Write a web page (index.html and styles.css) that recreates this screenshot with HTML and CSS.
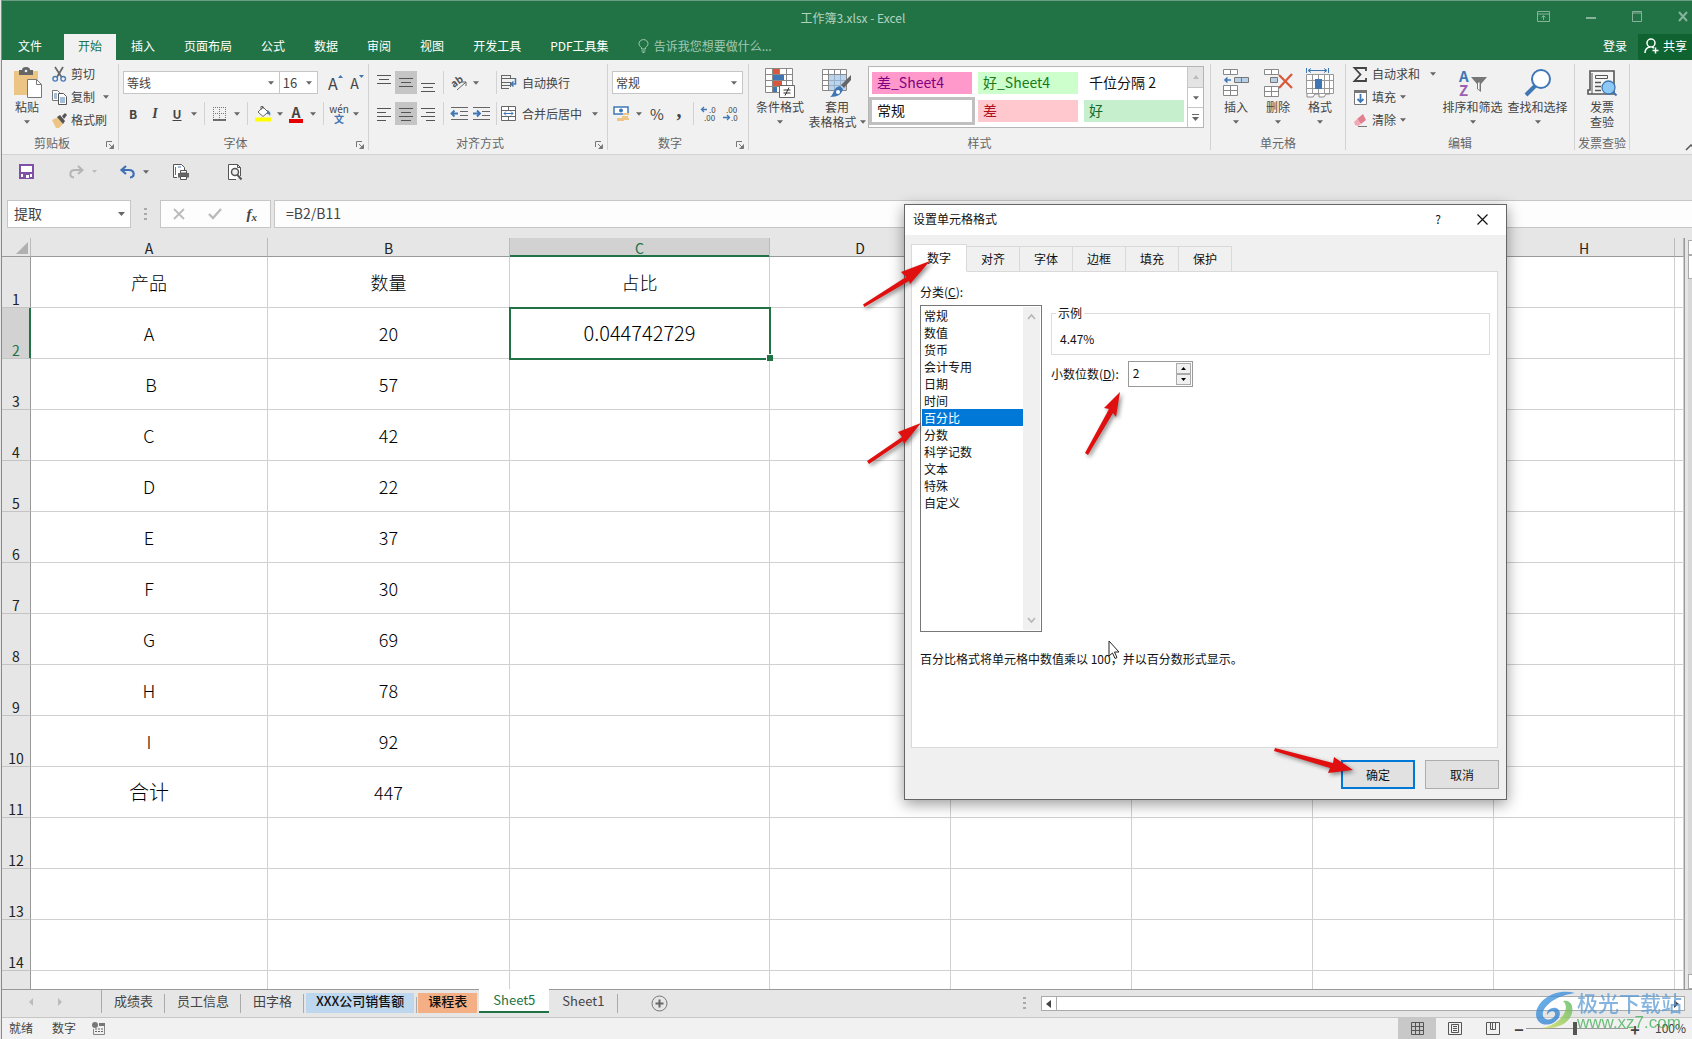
FILE: index.html
```html
<!DOCTYPE html>
<html lang="zh-CN">
<head>
<meta charset="utf-8">
<title>工作簿3.xlsx - Excel</title>
<link rel="stylesheet" href="styles.css">
</head>
<body>
<svg class="defs" width="0" height="0" aria-hidden="true">
  <symbol id="caret" viewBox="0 0 7 4"><path d="M0 0h7L3.500 4z" fill="#666"/></symbol>
  <symbol id="launch" viewBox="0 0 8 8"><path d="M.5 6V.5H6M3 3l3 3M7.500 3.500v4h-4" fill="none" stroke="#777"/><path d="M7.500 3.500v4h-4z" fill="#777"/></symbol>
  <symbol id="al-c" viewBox="0 0 14 14"><path d="M0 1.500h14M2 5.500h10M0 9.500h14M2 13.500h10" stroke="#555"/></symbol>
  <linearGradient id="swirl" x1="0" y1="0" x2="1" y2="1"><stop offset="0" stop-color="#3f9be6"/><stop offset="1" stop-color="#1f6fc4"/></linearGradient>
  <linearGradient id="leaf" x1="0" y1="1" x2="1" y2="0"><stop offset="0" stop-color="#d5dc4a"/><stop offset="1" stop-color="#4fb55c"/></linearGradient>
</svg>
<div class="app">
  <header class="titlebar">
    <h1 class="doc-title">工作簿3.xlsx - Excel</h1>
    <div class="win-btns">
      <button aria-label="功能区显示选项"><svg width="13" height="11" viewBox="0 0 13 11"><path d="M.5.5h12v10H.5zM.5 3h12M6.500 9V5M4.500 6.500l2-2 2 2" fill="none" stroke="currentColor"/></svg></button>
      <button aria-label="最小化"><svg width="10" height="11" viewBox="0 0 10 11"><path d="M0 7h10" stroke="currentColor" stroke-width="2"/></svg></button>
      <button aria-label="最大化"><svg width="10" height="11" viewBox="0 0 10 11"><path d="M.5.5h9v10h-9zM.5 2h9" fill="none" stroke="currentColor"/></svg></button>
      <button aria-label="关闭"><svg width="10" height="11" viewBox="0 0 10 11"><path d="M1 1l8 9M9 1l-8 9" stroke="currentColor" stroke-width="2"/></svg></button>
    </div>
  </header>
  <nav class="tabs">
    <button class="tab file">文件</button>
    <button class="tab active">开始</button>
    <button class="tab">插入</button>
    <button class="tab">页面布局</button>
    <button class="tab">公式</button>
    <button class="tab">数据</button>
    <button class="tab">审阅</button>
    <button class="tab">视图</button>
    <button class="tab">开发工具</button>
    <button class="tab">PDF工具集</button>
    <button class="tell"><svg width="11" height="14" viewBox="0 0 11 14"><path d="M3.500 10V8.500C2 7.500 1 6.300 1 4.700 1 2.300 3 .6 5.500.6S10 2.300 10 4.700c0 1.600-1 2.800-2.500 3.800V10zM3.500 12h4M4.500 13.500h2" fill="none" stroke="currentColor"/></svg>告诉我您想要做什么...</button>
    <span class="grow"></span>
    <button class="login">登录</button>
    <button class="share"><svg width="15" height="16" viewBox="0 0 15 16"><circle cx="7" cy="5" r="4" fill="none" stroke="#fff" stroke-width="1.500"/><path d="M1 15c0-3 2-5.500 5-6M8 9l2 1M11.500 9.500v6M8.500 12.500h6" fill="none" stroke="#fff" stroke-width="1.500"/></svg>共享</button>
  </nav>

  <section class="ribbon">
    <div class="group g-clip">
      <div class="body">
        <button class="big paste"><svg width="29" height="30" viewBox="0 0 29 30"><path d="M1 3h24v24H1z" fill="#ecc584"/><path d="M6 2h3a4 3 0 0 1 8 0h3v5H6z" fill="#666"/><circle cx="13" cy="3" r="1.300" fill="#f0f0f0"/><path d="M14.500 11.500h9l5 5v13h-14z" fill="#fff" stroke="#777"/><path d="M23.500 11.500v5h5" fill="none" stroke="#777"/></svg><span>粘贴</span><svg class="caret" width="6" height="4"><use href="#caret"/></svg></button>
        <div class="stack">
          <button class="sm"><svg width="15" height="15" viewBox="0 0 15 15"><path d="M3 0l6.500 10M11 0L5 10" stroke="#666" stroke-width="1.700"/><circle cx="3.200" cy="11.800" r="2.300" fill="none" stroke="#4a7fb5" stroke-width="1.400"/><circle cx="11.200" cy="11.800" r="2.300" fill="none" stroke="#4a7fb5" stroke-width="1.400"/></svg>剪切</button>
          <button class="sm"><svg width="15" height="15" viewBox="0 0 15 15"><path d="M.5.5h5l2 2v8h-7z" fill="#fff" stroke="#777"/><path d="M6.500 3.500h5l3 3v8h-8z" fill="#fff" stroke="#555"/><path d="M2 4h3M2 6h3M2 8h3M8 8h5M8 10h5M8 12h5" stroke="#4a7fb5"/></svg>复制<span class="grow"></span><svg class="caret" width="6" height="4"><use href="#caret"/></svg></button>
          <button class="sm"><svg width="15" height="15" viewBox="0 0 15 15"><path d="M0 7l6-3 5 7-4 4H4z" fill="#ecc584"/><path d="M5 4l3-2 5 6-2 3zM10 3l3-3 2 2-3 4z" fill="#555"/></svg>格式刷</button>
        </div>
      </div>
      <div class="cap launch"><span>剪贴板</span><svg width="8" height="8"><use href="#launch"/></svg></div>
    </div>

    <div class="group g-font">
      <div class="body col">
        <div class="line">
          <label class="combo fam"><select aria-label="字体"><option>等线</option></select><svg width="6" height="4"><use href="#caret"/></svg></label>
          <label class="combo size"><select aria-label="字号"><option>16</option></select><svg width="6" height="4"><use href="#caret"/></svg></label>
          <button class="ib gap6" aria-label="增大字号"><span class="g16">A</span><svg width="5" height="16" viewBox="0 0 5 16"><path d="M0 3l2.500-3L5 3z" fill="#3f77b5"/></svg></button>
          <button class="ib" aria-label="减小字号"><span class="g14">A</span><svg width="5" height="16" viewBox="0 0 5 16"><path d="M0 0h5L2.500 3z" fill="#3f77b5"/></svg></button>
        </div>
        <div class="line">
          <button class="ib bold">B</button><button class="ib ital">I</button><button class="ib under">U</button>
          <button class="dd" aria-label="下划线样式"><svg width="6" height="4"><use href="#caret"/></svg></button><i class="sep"></i>
          <button class="ib" aria-label="边框"><svg width="14" height="14" viewBox="0 0 14 14"><path d="M.5 0v13M6.500 0v13M12.500 0v13M0 .5h13M0 6.500h13" stroke="#777" stroke-dasharray="1 1"/><path d="M0 13h13" stroke="#444" stroke-width="1.500"/></svg></button>
          <button class="dd" aria-label="边框选项"><svg width="6" height="4"><use href="#caret"/></svg></button><i class="sep"></i>
          <button class="ib" aria-label="填充颜色"><svg width="17" height="17" viewBox="0 0 17 17"><path d="M3 7l5-5 5 5-5 4.500z" fill="#fff" stroke="#666"/><path d="M6 5V1.500h2V4" fill="none" stroke="#666"/><path d="M12 5c3 1 4 3 3 6-1-2-2-2-3-2z" fill="#4a7fb5"/><path d="M0 12.500h16v4H0z" fill="#ff0"/></svg></button>
          <button class="dd" aria-label="填充选项"><svg width="6" height="4"><use href="#caret"/></svg></button>
          <button class="ib fc" aria-label="字体颜色"><b>A</b></button>
          <button class="dd" aria-label="字体颜色选项"><svg width="6" height="4"><use href="#caret"/></svg></button><i class="sep"></i>
          <button class="ib pinyin"><span>wén</span><b>文</b></button>
          <button class="dd" aria-label="拼音选项"><svg width="6" height="4"><use href="#caret"/></svg></button>
        </div>
      </div>
      <div class="cap launch"><span>字体</span><svg width="8" height="8"><use href="#launch"/></svg></div>
    </div>

    <div class="group g-align">
      <div class="body col">
        <div class="line">
          <button class="ib" aria-label="顶端对齐"><svg width="14" height="18" viewBox="0 0 14 18"><path d="M0 1.500h14M2 5.500h10M0 9.500h14" stroke="#555"/></svg></button>
          <button class="ib on" aria-label="垂直居中"><svg width="14" height="18" viewBox="0 0 14 18"><path d="M0 4.500h14M2 8.500h10M0 12.500h14" stroke="#555"/></svg></button>
          <button class="ib" aria-label="底端对齐"><svg width="14" height="18" viewBox="0 0 14 18"><path d="M0 9.500h14M2 13.500h10M0 17.500h14" stroke="#555"/></svg></button><i class="sep"></i>
          <button class="ib" aria-label="方向"><svg width="17" height="16" viewBox="0 0 17 16"><text x="1" y="11" font-size="10" font-weight="700" fill="#555" transform="rotate(-35 5 9)">ab</text><path d="M6 15l9-8M11 7h4v4" fill="none" stroke="#666"/></svg></button>
          <button class="dd" aria-label="方向选项"><svg width="6" height="4"><use href="#caret"/></svg></button><span class="sp11"></span><i class="sep"></i>
          <button class="txt"><svg width="16" height="15" viewBox="0 0 16 15"><path d="M1 .5h8M1 3.500h13M1 7.500h8M1 10.500h8M1 13.500h7" stroke="#666"/><path d="M.5 0v14M9.500 0v4M9.500 7v5" stroke="#666"/><path d="M14.500 3v6H10M12.500 6.500l-2.500 2.500 2.500 2.500" fill="none" stroke="#3f77b5" stroke-width="1.500"/></svg>自动换行</button>
        </div>
        <div class="line">
          <button class="ib" aria-label="左对齐"><svg width="14" height="14" viewBox="0 0 14 14"><path d="M0 1.500h14M0 5.500h9M0 9.500h14M0 13.500h9" stroke="#555"/></svg></button>
          <button class="ib on" aria-label="居中"><svg width="14" height="14"><use href="#al-c"/></svg></button>
          <button class="ib" aria-label="右对齐"><svg width="14" height="14" viewBox="0 0 14 14"><path d="M0 1.500h14M5 5.500h9M0 9.500h14M5 13.500h9" stroke="#555"/></svg></button><i class="sep"></i>
          <button class="ib" aria-label="减少缩进"><svg width="17" height="13" viewBox="0 0 17 13"><path d="M0 .5h17M9 4.500h8M9 8.500h8M0 12.500h17" stroke="#666"/><path d="M7 6.500H1M3.500 3.500l-3 3 3 3" fill="none" stroke="#3f77b5" stroke-width="1.800"/></svg></button>
          <button class="ib" aria-label="增加缩进"><svg width="17" height="13" viewBox="0 0 17 13"><path d="M0 .5h17M9 4.500h8M9 8.500h8M0 12.500h17" stroke="#666"/><path d="M0 6.500h6M4 3.500l3 3-3 3" fill="none" stroke="#3f77b5" stroke-width="1.800"/></svg></button><i class="sep"></i>
          <button class="txt"><svg width="16" height="15" viewBox="0 0 16 15"><path d="M.5.5h14v14H.5zM.5 4.500h14M.5 10.500h14M7.500 0v4.500M7.500 10.500v4" fill="#fff" stroke="#666"/><path d="M3 7.500h9M5 5.500l-2 2 2 2M10 5.500l2 2-2 2" fill="none" stroke="#3f77b5"/></svg>合并后居中</button>
          <button class="dd merge" aria-label="合并选项"><svg width="6" height="4"><use href="#caret"/></svg></button>
        </div>
      </div>
      <div class="cap launch"><span>对齐方式</span><svg width="8" height="8"><use href="#launch"/></svg></div>
    </div>

    <div class="group g-num">
      <div class="body col">
        <div class="line">
          <label class="combo fmt"><select aria-label="数字格式"><option>常规</option></select><svg width="6" height="4"><use href="#caret"/></svg></label>
        </div>
        <div class="line">
          <button class="ib" aria-label="会计数字格式"><svg width="18" height="17" viewBox="0 0 18 17"><path d="M1 2h14v7H1z" fill="#fff" stroke="#3f77b5" stroke-width="1.500"/><circle cx="8" cy="5.500" r="2" fill="#3f77b5"/><path d="M10 8h6v2h-6zM9 11h6v2H9zM4 13h7v3H4zM11 13h5v2h-5z" fill="#ecc584"/></svg></button>
          <button class="dd" aria-label="货币选项"><svg width="6" height="4"><use href="#caret"/></svg></button>
          <button class="ib pct">%</button>
          <button class="ib comma" aria-label="千位分隔">,</button><i class="sep"></i>
          <button class="ib dec" aria-label="增加小数位数"><svg width="16" height="16" viewBox="0 0 16 16"><path d="M6 3.500H1M3 1L.5 3.500 3 6" fill="none" stroke="#3f77b5" stroke-width="1.300"/><text x="8" y="7" font-size="8">.0</text><text x="3" y="15" font-size="8">.00</text></svg></button>
          <button class="ib dec" aria-label="减少小数位数"><svg width="16" height="16" viewBox="0 0 16 16"><text x="3" y="7" font-size="8">.00</text><path d="M0 11.500h6M4 9l2.500 2.500L4 14" fill="none" stroke="#3f77b5" stroke-width="1.300"/><text x="8" y="15" font-size="8">.0</text></svg></button>
        </div>
      </div>
      <div class="cap launch"><span>数字</span><svg width="8" height="8"><use href="#launch"/></svg></div>
    </div>

    <div class="group g-style">
      <div class="body">
        <button class="big cond"><svg width="30" height="30" viewBox="0 0 30 30"><path d="M.5.5h27v24H.5zM.5 6.500h27M.5 12.500h27M.5 18.500h27M7.500.5v24M14.500.5v24M21.500.5v24" fill="#fff" stroke="#888"/><path d="M8 1h6v5H8zM8 13h9v5H8z" fill="#d9583c"/><path d="M8 7h11v5H8zM8 19h4v5H8z" fill="#3f77b5"/><path d="M14.500 17.500h15v12h-15z" fill="#fff" stroke="#666"/><path d="M18.500 22h7M18.500 25h7M24 19.500l-4 8" stroke="#333"/></svg><span>条件格式</span><svg class="caret" width="6" height="4"><use href="#caret"/></svg></button>
        <button class="big tblfmt"><svg width="30" height="30" viewBox="0 0 30 30"><path d="M.5 1.500h24v21H.5zM.5 6.500h24M.5 12.500h24M.5 17.500h24M6.500 1.500v21M12.500 1.500v21M18.500 1.500v21" fill="#fff" stroke="#888"/><path d="M7 7h17v15H7z" fill="#9cc3e6" opacity=".7"/><path d="M29 7v5l-7 8-3-3z" fill="#666"/><path d="M18 18l3 3c-1 5-5 8-13 8 4-2 3-10 10-11z" fill="#3f77b5"/><circle cx="16" cy="24" r="2" fill="#fff"/></svg><span>套用</span><span class="two">表格格式<svg class="caret" width="6" height="4"><use href="#caret"/></svg></span></button>
        <div class="gallery">
          <div class="styles">
            <button class="st pink">差_Sheet4</button><button class="st lime">好_Sheet4</button><button class="st">千位分隔 2</button>
            <button class="st sel">常规</button><button class="st bad">差</button><button class="st good">好</button>
          </div>
          <div class="gal-scroll">
            <button class="off" aria-label="向上"><svg width="6" height="4" viewBox="0 0 6 4"><path d="M0 4l3-4 3 4z" fill="#bbb"/></svg></button>
            <button aria-label="向下"><svg width="6" height="4"><use href="#caret"/></svg></button>
            <button aria-label="其他"><svg width="7" height="7" viewBox="0 0 7 7"><path d="M0 .5h7" stroke="#666"/><path d="M0 3h7L3.500 7z" fill="#666"/></svg></button>
          </div>
        </div>
      </div>
      <div class="cap"><span>样式</span></div>
    </div>

    <div class="group g-cells">
      <div class="body">
        <button class="big"><svg width="30" height="30" viewBox="0 0 30 30"><path d="M2.500 1.500h14v5h-14zM9.500 1.500v5M2.500 17.500h14v10h-14zM2.500 22.500h14M9.500 17.500v10" fill="#fff" stroke="#888"/><path d="M13.500 9.500h14v5h-14zM20.500 9.500v5" fill="#b8d0e6" stroke="#777"/><path d="M10 12H4M6.500 9.500L4 12l2.500 2.500" fill="none" stroke="#3f77b5" stroke-width="1.600"/></svg><span>插入</span><svg class="caret" width="6" height="4"><use href="#caret"/></svg></button>
        <button class="big"><svg width="30" height="30" viewBox="0 0 30 30"><path d="M1.500 1.500h14v5h-14zM8.500 1.500v5M1.500 18.500h14v10h-14zM1.500 23.500h14M8.500 18.500v10" fill="#fff" stroke="#888"/><path d="M7.500 9.500h7v5h-7z" fill="#b8d0e6" stroke="#777"/><path d="M16 7l13 13M29 6L16 20" stroke="#d9583c" stroke-width="2.200"/></svg><span>删除</span><svg class="caret" width="6" height="4"><use href="#caret"/></svg></button>
        <button class="big"><svg width="30" height="30" viewBox="0 0 30 30"><path d="M1.500 6.500h27v19h-27zM1.500 12.500h27M1.500 20.500h27M7.500 6.500v19M13.500 6.500v19M19.500 6.500v19M24.500 6.500v19" fill="#fff" stroke="#999"/><path d="M10 11h7v10h-7z" fill="#3f77b5"/><path d="M1.500 0v5M23.500 0v5M4 2.500h17M6 .5l-3 2 3 2M19 .5l3 2-3 2" fill="none" stroke="#3f77b5"/><path d="M2 26v3h6l2-3h4v3h5l2-3h4" fill="#fff" stroke="#888"/></svg><span>格式</span><svg class="caret" width="6" height="4"><use href="#caret"/></svg></button>
      </div>
      <div class="cap"><span>单元格</span></div>
    </div>

    <div class="group g-edit">
      <div class="body">
        <div class="stack">
          <button class="sm"><svg width="15" height="15" viewBox="0 0 15 15"><path d="M13 4V1H1.500l6 6.500-6 6.500H13v-3" fill="none" stroke="#444" stroke-width="1.800"/></svg>自动求和<span class="grow"></span><svg class="caret" width="6" height="4"><use href="#caret"/></svg></button>
          <button class="sm"><svg width="15" height="15" viewBox="0 0 15 15"><path d="M1.500.5h12v14h-12z" fill="#fff" stroke="#777"/><path d="M1 0h13v3H1z" fill="#777"/><path d="M7.500 4v8M4.500 9l3 3 3-3" fill="none" stroke="#3f77b5" stroke-width="1.800"/></svg>填充<svg class="caret" width="6" height="4"><use href="#caret"/></svg></button>
          <button class="sm"><svg width="15" height="15" viewBox="0 0 15 15"><path d="M4 6l6-5 3 6-5 4z" fill="#e08090"/><path d="M4 6l4 5-3 2-3-1-1-3z" fill="#f2a9b5"/><path d="M5 13.500h9" stroke="#777"/></svg>清除<svg class="caret" width="6" height="4"><use href="#caret"/></svg></button>
        </div>
        <button class="big sort"><svg width="30" height="30" viewBox="0 0 30 30"><text x="1" y="14" font-size="15" font-weight="700" fill="#3f77b5">A</text><text x="1" y="28" font-size="15" font-weight="700" fill="#9a5fb0">Z</text><path d="M13 9h16l-6 7v8l-4-3v-5z" fill="#777"/><path d="M20 15v6l1.500 1v-8z" fill="#fff"/></svg><span>排序和筛选</span><svg class="caret" width="6" height="4"><use href="#caret"/></svg></button>
        <button class="big sort"><svg width="30" height="30" viewBox="0 0 30 30"><circle cx="18" cy="11" r="9" fill="#fff" stroke="#3f77b5" stroke-width="2"/><path d="M12 18L3 27" stroke="#3f77b5" stroke-width="4"/></svg><span>查找和选择</span><svg class="caret" width="6" height="4"><use href="#caret"/></svg></button>
      </div>
      <div class="cap"><span>编辑</span></div>
    </div>

    <div class="group g-inv">
      <div class="body">
        <button class="big"><svg width="30" height="30" viewBox="0 0 30 30"><path d="M3 3h24v23H1v-4h2z" fill="#f6f6f6" stroke="#555" stroke-width="1.600"/><path d="M5 26V5" stroke="#555"/><path d="M8.500 7.500h12v3h-12z" fill="none" stroke="#555"/><path d="M8 14.500h6M8 18.500h6M8 22.500h6" stroke="#555" stroke-width="1.500"/><circle cx="21.500" cy="19.500" r="6.500" fill="#8ec8f5" stroke="#3f77b5" stroke-width="1.300"/><path d="M26 24l3.500 3.500" stroke="#3f77b5" stroke-width="2"/></svg><span>发票</span><span>查验</span></button>
      </div>
      <div class="cap"><span>发票查验</span></div>
    </div>
    <span class="grow"></span>
    <button class="collapse" aria-label="折叠功能区"><svg width="6" height="6" viewBox="0 0 6 6"><path d="M0 6l5-5 5 5" fill="none" stroke="#555" stroke-width="1.500"/></svg></button>
  </section>

  <div class="qat">
    <button aria-label="保存"><svg width="15" height="15" viewBox="0 0 15 15"><path d="M1 1h13v13H1z" fill="#fff" stroke="#8050a8" stroke-width="2"/><path d="M2 8h11v2H2zM4 10h7v4H4z" fill="#8050a8"/><path d="M7 11h3v3H7z" fill="#fff"/></svg></button>
    <button class="redo" aria-label="恢复"><svg width="15" height="14" viewBox="0 0 15 14"><path d="M13 5H6C0 5 0 12 5 12.500M9 1l4.500 4L9 9" fill="none" stroke="#b5b5b5" stroke-width="2"/></svg><svg width="5" height="3" viewBox="0 0 5 3"><path d="M0 0h5L2.500 3z" fill="#bbb"/></svg></button>
    <button class="undo" aria-label="撤消"><svg width="15" height="14" viewBox="0 0 15 14"><path d="M2 5h7c6 0 6 7 1 7.500M6 1L1.500 5 6 9" fill="none" stroke="#3f6fb5" stroke-width="2.200"/></svg><svg class="caret" width="6" height="4"><use href="#caret"/></svg></button>
    <button class="print" aria-label="快速打印"><svg width="17" height="16" viewBox="0 0 17 16"><path d="M4 13.500H.5V.5h8l3 3V6" fill="#fff" stroke="#555"/><path d="M2.500 3v8M5 3h3" stroke="#3f77b5"/><path d="M5 9h11v4.500H5z" fill="#666"/><path d="M7.500 6.500h6V9h-6zM7.500 12.500h6v3h-6z" fill="#fff" stroke="#555"/></svg></button>
    <button class="preview" aria-label="打印预览"><svg width="15" height="16" viewBox="0 0 15 16"><path d="M8 15.500H.5V.5h9l3 3V12M9.500.5v3h3" fill="#fff" stroke="#555"/><circle cx="7" cy="8" r="3.500" fill="#eee" stroke="#555" stroke-width="1.500"/><path d="M9.500 11l4 4.500" stroke="#555" stroke-width="2"/></svg></button>
  </div>

  <div class="fbar">
    <label class="combo name"><select aria-label="名称框"><option>提取</option></select><svg width="7" height="4"><use href="#caret"/></svg></label>
    <span class="dots"></span>
    <div class="fx">
      <button aria-label="取消"><svg width="12" height="12" viewBox="0 0 12 12"><path d="M1 1l10 10M11 1L1 11" stroke="#bbb" stroke-width="1.800"/></svg></button>
      <button aria-label="输入"><svg width="14" height="12" viewBox="0 0 14 12"><path d="M1 6l4 4 8-9" fill="none" stroke="#bbb" stroke-width="2.400"/></svg></button>
      <button class="fn" aria-label="插入函数"><i>f</i><sub>x</sub></button>
    </div>
    <input class="formula" aria-label="编辑栏" value="=B2/B11">
  </div>

  <main class="sheet">
    <table class="grid">
      <colgroup><col class="c0"><col class="cA"><col class="cB"><col class="cC"><col class="cN"><col class="cN"><col class="cN"><col class="cN"><col class="cN"><col></colgroup>
      <thead><tr><th class="corner"><svg width="12" height="12" viewBox="0 0 12 12"><path d="M12 0v12H0z" fill="#b0b0b0"/></svg></th><th>A</th><th>B</th><th class="hot">C</th><th>D</th><th>E</th><th>F</th><th>G</th><th>H</th><th></th></tr></thead>
      <tbody>
        <tr><th>1</th><td>产品</td><td>数量</td><td>占比</td><td></td><td></td><td></td><td></td><td></td><td></td></tr>
        <tr><th class="hot">2</th><td>A</td><td>20</td><td class="cur">0.044742729</td><td></td><td></td><td></td><td></td><td></td><td></td></tr>
        <tr><th>3</th><td>&nbsp;B</td><td>57</td><td></td><td></td><td></td><td></td><td></td><td></td><td></td></tr>
        <tr><th>4</th><td>C</td><td>42</td><td></td><td></td><td></td><td></td><td></td><td></td><td></td></tr>
        <tr><th>5</th><td>D</td><td>22</td><td></td><td></td><td></td><td></td><td></td><td></td><td></td></tr>
        <tr><th>6</th><td>E</td><td>37</td><td></td><td></td><td></td><td></td><td></td><td></td><td></td></tr>
        <tr><th>7</th><td>F</td><td>30</td><td></td><td></td><td></td><td></td><td></td><td></td><td></td></tr>
        <tr><th>8</th><td>G</td><td>69</td><td></td><td></td><td></td><td></td><td></td><td></td><td></td></tr>
        <tr><th>9</th><td>H</td><td>78</td><td></td><td></td><td></td><td></td><td></td><td></td><td></td></tr>
        <tr><th>10</th><td>I</td><td>92</td><td></td><td></td><td></td><td></td><td></td><td></td><td></td></tr>
        <tr><th>11</th><td class="sum">合计</td><td>447</td><td></td><td></td><td></td><td></td><td></td><td></td><td></td></tr>
        <tr><th>12</th><td></td><td></td><td></td><td></td><td></td><td></td><td></td><td></td><td></td></tr>
        <tr><th>13</th><td></td><td></td><td></td><td></td><td></td><td></td><td></td><td></td><td></td></tr>
        <tr><th>14</th><td></td><td></td><td></td><td></td><td></td><td></td><td></td><td></td><td></td></tr>
        <tr><th></th><td></td><td></td><td></td><td></td><td></td><td></td><td></td><td></td><td></td></tr>
      </tbody>
    </table>
    <div class="vscroll"><i class="btn"></i><i class="thumb"></i><span class="grow"></span><i class="btn"></i></div>
  </main>

  <div class="sheetbar">
    <button class="nav" aria-label="上一张"><svg width="5" height="8" viewBox="0 0 5 8"><path d="M4 0v8L0 4z" fill="#bbb"/></svg></button>
    <button class="nav" aria-label="下一张"><svg width="5" height="8" viewBox="0 0 5 8"><path d="M1 0v8l4-4z" fill="#bbb"/></svg></button>
    <button class="s first">成绩表</button><button class="s">员工信息</button><button class="s">田字格</button>
    <button class="s blue">XXX公司销售额</button><button class="s orange">课程表</button><button class="s cur-s">Sheet5</button><button class="s">Sheet1</button>
    <button class="add" aria-label="新工作表"><svg width="17" height="17" viewBox="0 0 17 17"><circle cx="8.500" cy="8.500" r="7.500" fill="none" stroke="#777"/><path d="M8.500 4.500v8M4.500 8.500h8" stroke="#666" stroke-width="2"/></svg></button>
    <span class="grow"></span>
    <span class="dots"></span>
    <div class="hscroll"><button aria-label="向左滚动"><svg width="5" height="8" viewBox="0 0 5 8"><path d="M5 0v8L0 4z" fill="#444"/></svg></button><span class="grow"></span><button aria-label="向右滚动"><svg width="5" height="8" viewBox="0 0 5 8"><path d="M0 0v8l5-4z" fill="#444"/></svg></button></div>
  </div>

  <footer class="status">
    <span>就绪</span><span>数字</span>
    <svg width="13" height="13" viewBox="0 0 13 13"><circle cx="3" cy="3" r="3" fill="#777"/><path d="M7 1h6v3H7z" fill="#777"/><path d="M1.500 7v5.500h11V4" fill="none" stroke="#888"/><path d="M3 7h8M3 9.500h8" stroke="#666" stroke-dasharray="2 1"/></svg>
    <span class="grow"></span>
    <button class="view on" aria-label="普通"><svg width="13" height="13" viewBox="0 0 13 13"><path d="M.5.5h12v12H.5zM.5 4.500h12M.5 8.500h12M4.500.5v12M8.500.5v12" fill="none" stroke="#555"/></svg></button>
    <button class="view" aria-label="页面布局"><svg width="14" height="13" viewBox="0 0 14 13"><path d="M.5.5h13v12H.5zM3.500 2.500h7v8h-7zM5 4.500h4M5 6.500h4M5 8.500h4" fill="none" stroke="#555"/></svg></button>
    <button class="view" aria-label="分页预览"><svg width="14" height="13" viewBox="0 0 14 13"><path d="M.5.5h13v12H.5zM4.500.5v7h5v-7M6.500 .5v7" fill="none" stroke="#555"/></svg></button>
    <button class="zm" aria-label="缩小">−</button><input class="zoom" type="range" aria-label="显示比例" min="0" max="100" value="48"><button class="zm" aria-label="放大">+</button>
    <span class="pc">100%</span>
  </footer>
</div>

<div class="dialog" role="dialog" aria-labelledby="dlg-title">
  <div class="dlg-head"><h2 id="dlg-title">设置单元格格式</h2><button>?</button><button aria-label="关闭"><svg width="11" height="11" viewBox="0 0 11 11"><path d="M.5.5l10 10M10.500.5l-10 10" stroke="#111" stroke-width="1.200"/></svg></button></div>
  <div class="dlg-body">
    <div class="dlg-tabs"><button class="act">数字</button><button>对齐</button><button>字体</button><button>边框</button><button>填充</button><button>保护</button></div>
    <div class="panel">
      <label class="cat-label" for="cat">分类(<u>C</u>):</label>
      <div class="cols">
        <div class="listbox">
          <select id="cat" size="12"><option>常规</option><option>数值</option><option>货币</option><option>会计专用</option><option>日期</option><option>时间</option><option selected>百分比</option><option>分数</option><option>科学记数</option><option>文本</option><option>特殊</option><option>自定义</option></select>
          <div class="lb-scroll"><svg width="9" height="6" viewBox="0 0 9 6"><path d="M1 5l3.500-4L8 5" fill="none" stroke="#b5b5b5" stroke-width="1.600"/></svg><svg width="9" height="6" viewBox="0 0 9 6"><path d="M1 1l3.500 4L8 1" fill="none" stroke="#b5b5b5" stroke-width="1.600"/></svg></div>
        </div>
        <div class="opts">
          <fieldset><legend>示例</legend>4.47%</fieldset>
          <div class="places"><label for="dp">小数位数(<u>D</u>):</label>
            <div class="spin"><input id="dp" type="number" value="2"><div class="arrows"><button aria-label="增加"><svg width="5" height="3" viewBox="0 0 5 3"><path d="M0 3l2.500-3L5 3z"/></svg></button><button aria-label="减少"><svg width="5" height="3" viewBox="0 0 5 3"><path d="M0 0h5L2.500 3z"/></svg></button></div></div>
          </div>
        </div>
      </div>
      <p class="note">百分比格式将单元格中数值乘以 100，并以百分数形式显示。</p>
    </div>
    <div class="dlg-foot"><button class="ok">确定</button><button>取消</button></div>
  </div>
</div>

<svg class="marks" viewBox="0 0 520 540" aria-hidden="true">
  <g fill="#e01010">
    <path d="M3 54.500L46 27l-5-5 29-11-20 23-1-3L4.500 57z"/>
    <path d="M7 211L42 187l-4-5 23-9-17 21-1-3-34 23z"/>
    <path d="M225 203L249 159l-5-1 16-16-4 25-3-4-25 42z"/>
    <path d="M415 498l58 15 1-6 19 13-25 3 2-5-56-17z"/>
  </g>
</svg>
<svg class="pointer" width="13" height="20" viewBox="0 0 13 20" aria-hidden="true"><path d="M1 1v15l3.500-3 2.500 5.500 2-1L6.500 12H11z" fill="#fff" stroke="#222"/></svg>
<div class="brand">
  <svg width="44" height="40" viewBox="0 0 44 40"><path d="M42 3C22-2 4 10 3 24c0 9 8 13 17 9 8-4 9-13 3-15-5-1-10 3-9 7 2-4 7-5 8-2 1 4-5 8-9 6C4 25 14 7 42 3z" fill="url(#swirl)"/><path d="M9 38c18 2 33-8 30-22-1-4-5-6-9-5 5 4 3 12-3 18-5 5-12 8-18 9z" fill="url(#leaf)"/></svg>
  <div class="brand-text"><b>极光下载站</b><span>www.xz7.com</span></div>
</div>
</body>
</html>
```
FILE: styles.css
```css
* { box-sizing: border-box; }
html, body { height: 100%; }
body { margin: 0; overflow: hidden; background: #e6e6e6; color: #444; font: 12px/16px "Noto Sans CJK SC", "Noto Sans", sans-serif; }
button, input, select { font: inherit; color: inherit; border: 0; background: none; padding: 0; margin: 0; border-radius: 0; outline: 0; }
button { display: flex; align-items: center; justify-content: center; white-space: nowrap; }
select { appearance: none; }
svg { display: block; flex: none; overflow: visible; }
h1, h2, p { margin: 0; font: inherit; }
.defs, .marks, .pointer { position: absolute; }
.grow { flex: 1; }

.app { display: flex; flex-direction: column; height: 100%; margin-left: 1px; border-left: 1px solid #8a8a8a; overflow: hidden; }

/* title bar and ribbon tabs */
.titlebar { flex: none; height: 34px; display: grid; grid-template-columns: 1fr auto 1fr; align-items: center; background: #217346; border-top: 1px solid #6d9d83; color: #b3d3c0; }
.doc-title { grid-column: 2; padding-left: 12px; }
.win-btns { display: flex; justify-content: flex-end; gap: 36px; color: #86b399; padding: 0 4px 2px 0; }
.tabs { flex: none; display: flex; height: 26px; background: #217346; color: #fff; padding-left: 2px; }
.tabs button { padding-bottom: 2px; }
.tab { padding: 0 14px; }
.tab + .tab { margin-left: 1px; }
.tab.file { padding-right: 22px; }
.tab.active { background: #f1f1f1; color: #217346; margin: 0; }
.tell { color: #a3c9b3; gap: 5px; margin-left: 15px; }
.login { padding: 0 11px; }
.share { background: #0f6331; gap: 4px; padding: 0 5px 0 6px; }

/* ribbon */
.ribbon { flex: none; display: flex; height: 95px; padding: 4px 0; background: #f1f1f1; border-bottom: 1px solid #d2d2d2; }
.group { flex: none; display: flex; flex-direction: column; border-right: 1px solid #d2d2d2; }
.g-clip { width: 117px; }
.g-font { width: 250px; }
.g-align { width: 239px; }
.g-num { width: 141px; }
.g-style { width: 462px; }
.g-cells { width: 135px; }
.g-edit { width: 229px; }
.g-inv { width: 55px; }
.body { flex: 1; min-height: 0; display: flex; }
.body.col { flex-direction: column; padding: 7px 0 0 3px; gap: 8px; }
.g-align .body.col { padding-left: 4px; }
.cap { flex: none; height: 17px; line-height: 20px; display: flex; justify-content: center; color: #666; position: relative; white-space: nowrap; }
.cap.launch { padding-right: 16px; }
.cap svg { position: absolute; right: 4px; bottom: 1px; }
.line { display: flex; align-items: center; height: 23px; }
.big { flex-direction: column; justify-content: flex-start; width: 42px; padding-top: 4px; }
.big > span { height: 15px; line-height: 15px; }
.big > svg:first-child { margin-bottom: 1px; }
.big > .caret { margin-top: 6px; }
.two { display: flex; align-items: center; gap: 3px; }
.paste { width: 50px; }
.stack { display: flex; flex-direction: column; padding-top: 2px; gap: 7px; }
.stack button { justify-content: flex-start; gap: 4px; height: 16px; }
.g-clip .stack { width: 57px; }
.g-edit .stack { width: 90px; padding-left: 7px; }
.combo { display: grid; background: #fff; border: 1px solid #c6c6c6; height: 23px; }
.combo select { grid-area: 1 / 1; padding: 0 5px 0 3px; width: 100%; }
.combo svg { grid-area: 1 / 1; place-self: center end; margin-right: 5px; pointer-events: none; }
.fam { width: 158px; margin-left: 1px; }
.size { width: 40px; margin-left: -1px; font-size: 13px; }
.fmt { width: 131px; margin-left: 1px; }
.ib { width: 22px; height: 23px; }
.ib.on { background: #c5c5c5; }
.gap6 { margin-left: 6px; }
.g16 { font-size: 16px; }
.g14 { font-size: 14px; }
.bold { font-weight: 700; }
.ital { font: italic bold 14px "Liberation Serif", serif; }
.under { font-weight: 700; text-decoration: underline; }
.dd { width: 11px; height: 23px; }
.sep { width: 1px; height: 23px; background: #d2d2d2; margin: 0 4px 0 5px; }
.g-align .sep { margin: 0 4px; }
.sp11 { width: 11px; }
.fc b { font-size: 14px; line-height: 14px; border-bottom: 4px solid #e60000; padding: 0 3px; }
.pinyin { flex-direction: column; }
.pinyin span { font-size: 10px; line-height: 9px; }
.pinyin b { font-size: 10px; line-height: 11px; color: #3f77b5; }
.txt { gap: 5px; }
.merge { margin-left: 7px; }
.pct { font-size: 15px; width: 26px; }
.comma { font: bold 20px/10px "Liberation Serif", serif; padding-bottom: 8px; width: 18px; }
.dec { fill: #444; }
.cond { width: 62px; }
.tblfmt { width: 52px; }
.gallery { display: flex; width: 336px; height: 62px; margin: 2px 0 0 5px; border: 1px solid #b5b5b5; background: #fff; }
.styles { flex: 1; display: grid; grid-template-columns: repeat(3, 100px); grid-template-rows: 22px 22px; gap: 6px; padding: 5px 3px; color: #111; font-size: 14px; }
.st { justify-content: flex-start; padding: 0 0 2px 5px; }
.pink { background: #ff99cc; color: #800080; }
.lime { background: #ccffcc; color: #1a7a1a; }
.bad { background: #ffc7ce; color: #b0101c; }
.good { background: #c6efce; color: #17692a; }
.sel { outline: 3px solid #c0c0c0; }
.gal-scroll { display: grid; grid-template-rows: 1fr 1fr 1fr; width: 16px; border-left: 1px solid #c6c6c6; }
.gal-scroll button + button { border-top: 1px solid #c6c6c6; }
.off { background: #e4e4e4; }
.g-cells .body { padding-left: 4px; }
.sort { width: 65px; }
.g-edit .stack + .sort { margin-left: 4px; }
.g-inv .body { padding-left: 6px; }
.collapse { align-self: flex-end; }

/* quick access toolbar */
.qat { flex: none; display: flex; align-items: center; height: 45px; padding: 0 0 12px 17px; }
.redo { margin-left: 35px; gap: 8px; }
.undo { margin-left: 23px; gap: 8px; }
.print { margin-left: 24px; }
.preview { margin-left: 38px; }

/* formula bar */
.fbar { flex: none; display: flex; height: 28px; padding-left: 5px; font-size: 14px; }
.fbar .combo { height: 28px; }
.name { width: 124px; }
.name select { padding: 0 5px 2px 6px; }
.dots { width: 3px; height: 13px; align-self: center; background: repeating-linear-gradient(#aaa 0 2px, transparent 2px 5px); }
.fbar .dots { margin: 0 13px; }
.fx { display: flex; width: 111px; background: #fdfdfd; border: 1px solid #c6c6c6; }
.fx button { flex: 1; }
.fn { font: bold 15px "Liberation Serif", serif; }
.fn sub { font: italic bold 11px "Liberation Serif", serif; margin-top: 5px; }
.formula { flex: 1; min-width: 0; margin-left: 3px; padding: 0 11px 2px; background: #fdfdfd; border: 1px solid #c6c6c6; border-right: 0; }

/* worksheet */
.sheet { flex: 1; min-height: 0; overflow: hidden; display: flex; align-items: flex-start; padding-top: 10px; }
.grid { flex: 1; width: 100%; table-layout: fixed; border-collapse: separate; border-spacing: 0; border-right: 1px solid #999; background: #fff; font-size: 18px; font-weight: 300; color: #000; }
.c0 { width: 29px; }
.cA { width: 237px; }
.cB { width: 242px; }
.cC { width: 260px; }
.cN { width: 181px; }
.grid th, .grid td { padding: 0; border: 0 solid #d0d0d0; border-width: 0 1px 1px 0; text-align: center; }
.grid td { height: 51px; line-height: 24px; }
.grid th { background: #e6e6e6; font-size: 14px; font-weight: 400; line-height: 16px; color: #222; }
.grid thead th { height: 19px; padding-top: 2px; border-color: #bbb; border-bottom-color: #999; }
.grid tbody th { vertical-align: bottom; border-color: #c4c4c4; border-right-color: #999; }
.grid .corner svg { margin-left: 14px; }
.grid th.hot { background: #d2d2d2; color: #217346; }
.grid thead th.hot { box-shadow: inset 0 -1px #217346; border-bottom-color: #217346; }
.grid tbody th.hot { box-shadow: inset -1px 0 #217346; border-right-color: #217346; }
.grid .sum { font-size: 20px; }
.grid .cur { position: relative; font-size: 20px; outline: 2px solid #217346; outline-offset: -1px; }
.cur::after { content: ""; position: absolute; right: -4px; bottom: -3px; width: 6px; height: 6px; background: #217346; border: 1px solid #fff; border-width: 1px 0 0 1px; }
.vscroll { align-self: stretch; flex: none; width: 4px; margin: 2px 0 0 3px; background: #d8d8d8; display: flex; flex-direction: column; }
.vscroll i { height: 15px; background: #fff; border: 1px solid #aaa; border-right: 0; }
.vscroll .thumb { height: 24px; }

/* sheet tabs */
.sheetbar { flex: none; display: flex; height: 28px; border-top: 1px solid #999; font-size: 13px; padding: 0 7px 4px 9px; }
.nav { width: 28px; padding-left: 12px; }
.s { position: relative; padding: 0 12px 2px; }
.s::after { content: ""; position: absolute; right: 0; top: 4px; bottom: 0; width: 1px; background: #aaa; }
.first { margin-left: 34px; border-left: 1px solid #aaa; }
.s.blue, .s.orange { color: #111; background: #bdd7ee; margin: 3px 4px 0 2px; font-weight: 500; padding: 0 10px 4px; }
.s.blue::after { right: -3px; }
.s.orange { background: #f4b084; margin: 3px 2px 0 0; }
.s.orange::after { display: none; }
.s.cur-s { background: #fff; color: #217346; margin-top: -1px; border-bottom: 2px solid #217346; padding: 0 14px; }
.s.cur-s::after { display: none; }
.s.cur-s + .s { padding: 0 14px 2px 13px; }
.add { margin: 4px 0 0 33px; }
.sheetbar .dots { margin: 3px 15px 0 0; }
.hscroll { width: 38.500%; height: 15px; margin-top: 6px; display: flex; background: #fff; border: 1px solid #aaa; }
.hscroll button { width: 15px; border: 0 solid #aaa; }
.hscroll button:first-child { border-right-width: 1px; }

/* status bar */
.status { flex: none; display: flex; align-items: center; height: 22px; padding: 0 7px; border-top: 1px solid #c6c6c6; background: #f1f1f1; line-height: 14px; }
.status > span { padding-bottom: 2px; }
.status > span + span:not(.grow) { margin: 0 16px 0 19px; }
.view { width: 38px; height: 21px; }
.view.on { background: #c8c8c8; }
.zm { font-size: 16px; font-weight: 700; width: 14px; }
.zoom { appearance: none; width: 102px; height: 14px; background: linear-gradient(#999, #999) center / 100% 1px no-repeat; }
.zoom::-webkit-slider-thumb { appearance: none; width: 4px; height: 13px; background: #555; }
.status .pc { margin-left: 13px; width: 30px; }

/* format-cells dialog */
.dialog { position: absolute; left: 904px; top: 204px; width: 603px; display: flex; flex-direction: column; border: 1px solid #666; background: #f0f0f0; color: #111; box-shadow: 0 4px 14px rgba(0, 0, 0, .4); }
.dlg-head { display: flex; height: 30px; background: #fff; padding: 0 18px 2px 8px; gap: 36px; }
.dlg-head h2 { flex: 1; align-self: center; }
.dlg-body { padding: 9px 8px 10px 6px; }
.dlg-tabs { display: flex; align-items: flex-end; height: 28px; }
.dlg-tabs button { width: 53px; height: 26px; border: 1px solid #d9d9d9; border-left: 0; }
.dlg-tabs .act { width: 56px; height: 28px; background: #fff; border-left: 1px solid #d9d9d9; border-bottom-color: #fff; }
.panel { height: 477px; margin-top: -1px; background: #fff; border: 1px solid #d9d9d9; padding: 12px 7px 0 8px; }
.cat-label { display: block; height: 21px; }
.cols { display: flex; gap: 9px; }
.listbox { display: flex; width: 122px; height: 327px; border: 1px solid #777; padding: 1px; }
.listbox select { flex: 1; overflow: hidden; color: #111; }
.listbox option { height: 17px; min-height: 17px; line-height: 17px; padding: 0 2px; }
.listbox option:checked { background: linear-gradient(#0078d7, #0078d7); color: #fff !important; }
.lb-scroll { width: 17px; background: #f0f0f0; display: flex; flex-direction: column; align-items: center; justify-content: space-between; padding: 7px 0; }
.opts { flex: 1; }
fieldset { margin: 0; border: 1px solid #dcdcdc; padding: 10px 8px 7px; height: 50px; }
legend { padding: 0 2px; margin-left: -4px; }
.places { display: flex; align-items: center; justify-content: flex-start; gap: 9px; margin-top: 6px; }
.spin { display: flex; width: 65px; height: 26px; border: 1px solid #999; padding: 1px; }
.spin input { flex: 1; min-width: 0; padding: 0 0 2px 3px; appearance: textfield; }
.spin input::-webkit-inner-spin-button { appearance: none; }
.arrows { display: grid; width: 15px; }
.arrows button { border: 1px solid #aaa; background: #f0f0f0; }
.note { margin-top: 19px; }
.dlg-foot { display: flex; justify-content: flex-end; gap: 10px; margin: 12px -1px 0 0; }
.dlg-foot button { width: 74px; height: 29px; background: #e1e1e1; border: 1px solid #adadad; }
.dlg-foot .ok { border: 2px solid #0078d7; }

/* annotations over the window */
.marks { left: 860px; top: 250px; width: 520px; height: 540px; pointer-events: none; filter: drop-shadow(2px 2px 2px rgba(0, 0, 0, .45)); }
.pointer { left: 1108px; top: 640px; }
.brand { position: absolute; right: 10px; bottom: 7px; display: flex; opacity: .75; pointer-events: none; }
.brand-text { display: flex; flex-direction: column; }
.brand b { color: #5b9bd5; font-size: 21px; line-height: 24px; font-weight: 500; }
.brand span { color: #3fae52; font: 17px/18px "Liberation Sans", sans-serif; }
```
